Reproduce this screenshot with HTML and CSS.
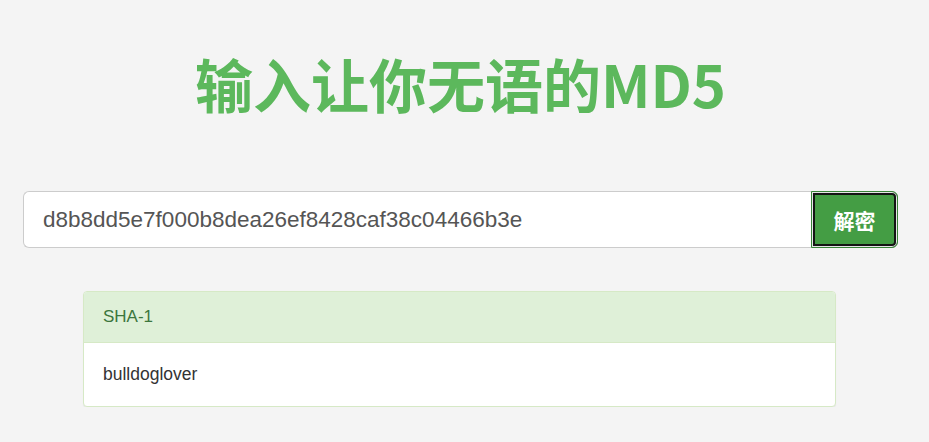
FILE: index.html
```html
<!DOCTYPE html>
<html lang="zh-CN">
<head>
    <meta charset="UTF-8">
    <meta name="viewport" content="width=device-width, initial-scale=1.0">
    <title>输入让你无语的MD5</title>
    <link rel="stylesheet" href="styles.css">
</head>
<body>
    <div class="contenedor">
        <h1 class="titulo">输入让你无语的MD5</h1>

        <form class="grupo-entrada" onsubmit="return false">
            <input type="text" class="entrada" value="d8b8dd5e7f000b8dea26ef8428caf38c04466b3e">
            <button type="submit" class="boton-descifrar">解密</button>
        </form>

        <div class="panel-resultado">
            <div class="panel-cabecera">SHA-1</div>
            <div class="panel-cuerpo">bulldoglover</div>
        </div>
    </div>
</body>
</html>
```

FILE: styles.css
```css
body {
    margin: 0;
    padding: 0;
    background-color: #f4f4f4;
    font-family: "Liberation Sans", Arial, "Noto Sans CJK SC", sans-serif;
    color: #333;
}
.contenedor {
    padding: 0 31px 0 23px;
}
.titulo {
    margin: 0;
    padding-top: 36px;
    height: 96px;
    text-align: center;
    font-family: "Noto Sans CJK SC", sans-serif;
    font-weight: bold;
    font-size: 58px;
    line-height: 94px;
    color: #5cb85c;
}
.grupo-entrada {
    display: flex;
    margin: 59px 0 0 0;
    height: 57px;
}
.entrada {
    flex: 1;
    min-width: 0;
    height: 57px;
    box-sizing: border-box;
    border: 1px solid #ccc;
    border-right: none;
    border-radius: 6px 0 0 6px;
    padding: 0 19px;
    font-family: "Liberation Sans", Arial, sans-serif;
    font-size: 22.5px;
    color: #555;
    background: #fff;
    outline: none;
}
.boton-descifrar {
    width: 87px;
    height: 57px;
    box-sizing: border-box;
    border: 1px solid #398439;
    border-radius: 0 6px 6px 0;
    background: #449d44;
    box-shadow: inset 0 0 0 1px #e6e6e6, inset 0 0 0 3px #141414;
    color: #fff;
    font-family: "Noto Sans CJK SC", sans-serif;
    font-weight: bold;
    font-size: 21px;
    cursor: pointer;
}
.panel-resultado {
    margin: 43px 62px 0 60px;
    background: #fff;
    border: 1px solid #d6e9c6;
    border-radius: 4px;
    box-shadow: 0 1px 1px rgba(0, 0, 0, 0.05);
    overflow: hidden;
}
.panel-cabecera {
    background: #dff0d8;
    color: #3c763d;
    border-bottom: 1px solid #d6e9c6;
    height: 50px;
    line-height: 50px;
    padding: 0 19px;
    font-size: 17px;
}
.panel-cuerpo {
    height: 63px;
    line-height: 63px;
    padding: 0 19px;
    font-size: 17.5px;
    color: #333;
}
```
